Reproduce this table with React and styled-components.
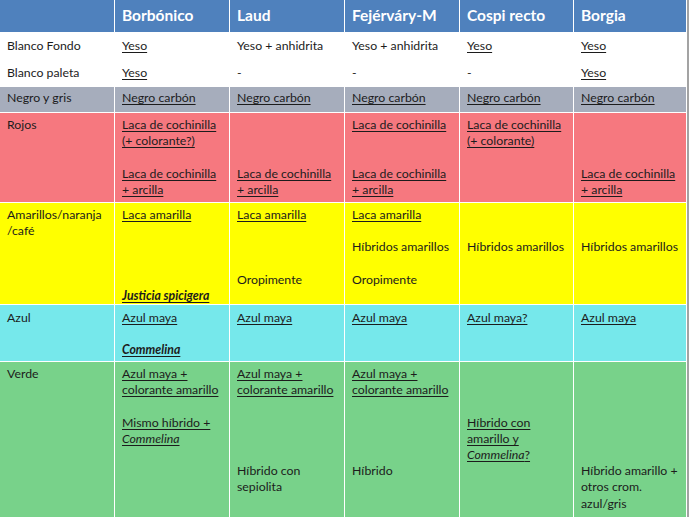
import { Fragment } from "react";
import styled, { createGlobalStyle } from "styled-components";

const GlobalStyle = createGlobalStyle`
  html, body {
    margin: 0;
    padding: 0;
    background: #ffffff;
  }
  body {
    font-family: Lato, "Open Sans", "Liberation Sans", sans-serif;
  }
`;

const colors = {
  header: "#4f81bd",
  white: "#ffffff",
  gray: "#a6adbc",
  red: "#f6787f",
  yellow: "#ffff00",
  cyan: "#76e8eb",
  green: "#78d28a",
};

const Frame = styled.div`
  width: 689px;
  height: 517px;
  overflow: hidden;
  display: flex;
  background: #ffffff;
`;

const Table = styled.div`
  width: 686px;
  display: grid;
  grid-template-columns: 114px 114px 114px 114px 113px 112px;
  grid-template-rows: 32px 27px 25px 25px 89px 101px 56px 155px;
  gap: 1px;
  background: #ffffff;
`;

const EdgeLine = styled.div`
  width: 2px;
  margin-left: 1px;
  background: #a3a3a3;
`;

const HeaderCell = styled.div`
  background: ${colors.header};
  color: #ffffff;
  font-weight: 700;
  font-size: 15.5px;
  padding: 6px 0 0 7px;
  white-space: nowrap;
`;

const Cell = styled.div`
  background: ${(p) => colors[p.$bg]};
  color: #1c1c1c;
  font-size: 12.3px;
  line-height: 16.2px;
  padding: ${(p) => p.$top}px 0 0 7px;
  white-space: nowrap;
`;

const Line = styled.div`
  min-height: 16.2px;
`;

const U = styled.span`
  text-decoration: underline;
  text-decoration-thickness: 1px;
  text-underline-offset: 2px;
`;

const Species = styled(U)`
  font-weight: 700;
  font-style: italic;
`;

const headers = ["", "Borbónico", "Laud", "Fejérváry-M", "Cospi recto", "Borgia"];

// each cell is a list of lines; null is an empty line
const rows = [
  {
    bg: "white",
    top: 5,
    label: ["Blanco Fondo"],
    cells: [
      [<U>Yeso</U>],
      ["Yeso + anhidrita"],
      ["Yeso + anhidrita"],
      [<U>Yeso</U>],
      [<U>Yeso</U>],
    ],
  },
  {
    bg: "white",
    top: 4,
    label: ["Blanco paleta"],
    cells: [[<U>Yeso</U>], ["-"], ["-"], ["-"], [<U>Yeso</U>]],
  },
  {
    bg: "gray",
    top: 3,
    label: ["Negro y gris"],
    cells: [
      [<U>Negro carbón</U>],
      [<U>Negro carbón</U>],
      [<U>Negro carbón</U>],
      [<U>Negro carbón</U>],
      [<U>Negro carbón</U>],
    ],
  },
  {
    bg: "red",
    top: 4,
    label: ["Rojos"],
    cells: [
      [
        <U>Laca de cochinilla</U>,
        <U>(+ colorante?)</U>,
        null,
        <U>Laca de cochinilla</U>,
        <U>+ arcilla</U>,
      ],
      [null, null, null, <U>Laca de cochinilla</U>, <U>+ arcilla</U>],
      [
        <U>Laca de cochinilla</U>,
        null,
        null,
        <U>Laca de cochinilla</U>,
        <U>+ arcilla</U>,
      ],
      [<U>Laca de cochinilla</U>, <U>(+ colorante)</U>],
      [null, null, null, <U>Laca de cochinilla</U>, <U>+ arcilla</U>],
    ],
  },
  {
    bg: "yellow",
    top: 4,
    label: ["Amarillos/naranja", "/café"],
    cells: [
      [<U>Laca amarilla</U>, null, null, null, null, <Species>Justicia spicigera</Species>],
      [<U>Laca amarilla</U>, null, null, null, "Oropimente"],
      [<U>Laca amarilla</U>, null, "Híbridos amarillos", null, "Oropimente"],
      [null, null, "Híbridos amarillos"],
      [null, null, "Híbridos amarillos"],
    ],
  },
  {
    bg: "cyan",
    top: 5,
    label: ["Azul"],
    cells: [
      [<U>Azul maya</U>, null, <Species>Commelina</Species>],
      [<U>Azul maya</U>],
      [<U>Azul maya</U>],
      [<U>Azul maya?</U>],
      [<U>Azul maya</U>],
    ],
  },
  {
    bg: "green",
    top: 4,
    label: ["Verde"],
    cells: [
      [
        <U>Azul maya +</U>,
        <U>colorante amarillo</U>,
        null,
        <U>Mismo híbrido +</U>,
        <U>
          <i>Commelina</i>
        </U>,
      ],
      [
        <U>Azul maya +</U>,
        <U>colorante amarillo</U>,
        null,
        null,
        null,
        null,
        "Híbrido con",
        "sepiolita",
      ],
      [<U>Azul maya +</U>, <U>colorante amarillo</U>, null, null, null, null, "Híbrido"],
      [
        null,
        null,
        null,
        <U>Híbrido con</U>,
        <U>amarillo y</U>,
        <U>
          <i>Commelina</i>?
        </U>,
      ],
      [null, null, null, null, null, null, "Híbrido amarillo +", "otros crom.", "azul/gris"],
    ],
  },
];

function Lines({ items }) {
  return items.map((item, i) => <Line key={i}>{item}</Line>);
}

export default function App() {
  return (
    <>
      <GlobalStyle />
      <Frame>
        <Table>
          {headers.map((h, i) => (
            <HeaderCell key={i}>{h}</HeaderCell>
          ))}
          {rows.map((row, r) => (
            <Fragment key={r}>
              <Cell $bg={row.bg} $top={row.top}>
                <Lines items={row.label} />
              </Cell>
              {row.cells.map((c, i) => (
                <Cell key={i} $bg={row.bg} $top={row.top}>
                  <Lines items={c} />
                </Cell>
              ))}
            </Fragment>
          ))}
        </Table>
        <EdgeLine />
      </Frame>
    </>
  );
}
